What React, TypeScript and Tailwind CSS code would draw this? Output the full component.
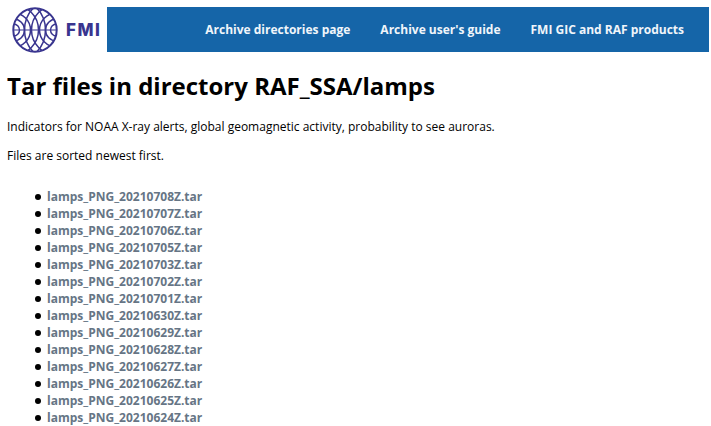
import React from 'react';

const FILES = [
  'lamps_PNG_20210708Z.tar',
  'lamps_PNG_20210707Z.tar',
  'lamps_PNG_20210706Z.tar',
  'lamps_PNG_20210705Z.tar',
  'lamps_PNG_20210703Z.tar',
  'lamps_PNG_20210702Z.tar',
  'lamps_PNG_20210701Z.tar',
  'lamps_PNG_20210630Z.tar',
  'lamps_PNG_20210629Z.tar',
  'lamps_PNG_20210628Z.tar',
  'lamps_PNG_20210627Z.tar',
  'lamps_PNG_20210626Z.tar',
  'lamps_PNG_20210625Z.tar',
  'lamps_PNG_20210624Z.tar',
];

const RADII = [6, 11, 17, 25, 32];

function Logo() {
  return (
    <svg width="46" height="46" viewBox="0 0 46 46" fill="none" stroke="#39358f" strokeWidth="1.5">
      <defs>
        <clipPath id="disc">
          <circle cx="23" cy="23" r="21.5" />
        </clipPath>
      </defs>
      <g clipPath="url(#disc)">
        {RADII.map((r) => (
          <React.Fragment key={r}>
            <circle cx="1.5" cy="23" r={r} />
            <circle cx="44.5" cy="23" r={r} />
          </React.Fragment>
        ))}
        <path d="M1.500 23h43" strokeWidth="1.200" />
      </g>
      <circle cx="23" cy="23" r="21.700" strokeWidth="2" />
    </svg>
  );
}

export default function App() {
  return (
    <div className="h-[426px] overflow-hidden bg-white font-['Open_Sans','Noto_Sans',sans-serif] text-black">
      <header className="flex items-stretch pt-[7px]">
        <div className="flex w-[107px] items-center gap-[8px] pl-[12px]">
          <Logo />
          <span className="font-['Inter',sans-serif] text-[17px] leading-none font-extrabold tracking-[1.5px] text-[#39358f]">FMI</span>
        </div>
        <nav className="flex h-[45px] w-[602px] items-center justify-end gap-[30px] bg-[#1565a8] pr-[25px] text-[12px] font-bold text-[#f0f5fa]">
          <a>Archive directories page</a>
          <a>Archive user's guide</a>
          <a>FMI GIC and RAF products</a>
        </nav>
      </header>

      <main className="px-[7px]">
        <h1 className="mt-[17px] text-[24px] leading-[32px] font-bold">Tar files in directory RAF_SSA/lamps</h1>
        <p className="mt-[16px] text-[12px] leading-[17px]">
          Indicators for NOAA X-ray alerts, global geomagnetic activity, probability to see auroras.
        </p>
        <p className="mt-[12px] text-[12px] leading-[17px]">Files are sorted newest first.</p>
        <ul className="mt-[24px] pl-[28px] text-[12px] leading-[17px]">
          {FILES.map((f) => (
            <li key={f} className="flex items-center gap-[6px]">
              <span className="h-[6px] w-[6px] rounded-full bg-black" />
              <a className="font-bold text-[#667585]">{f}</a>
            </li>
          ))}
        </ul>
      </main>
    </div>
  );
}
